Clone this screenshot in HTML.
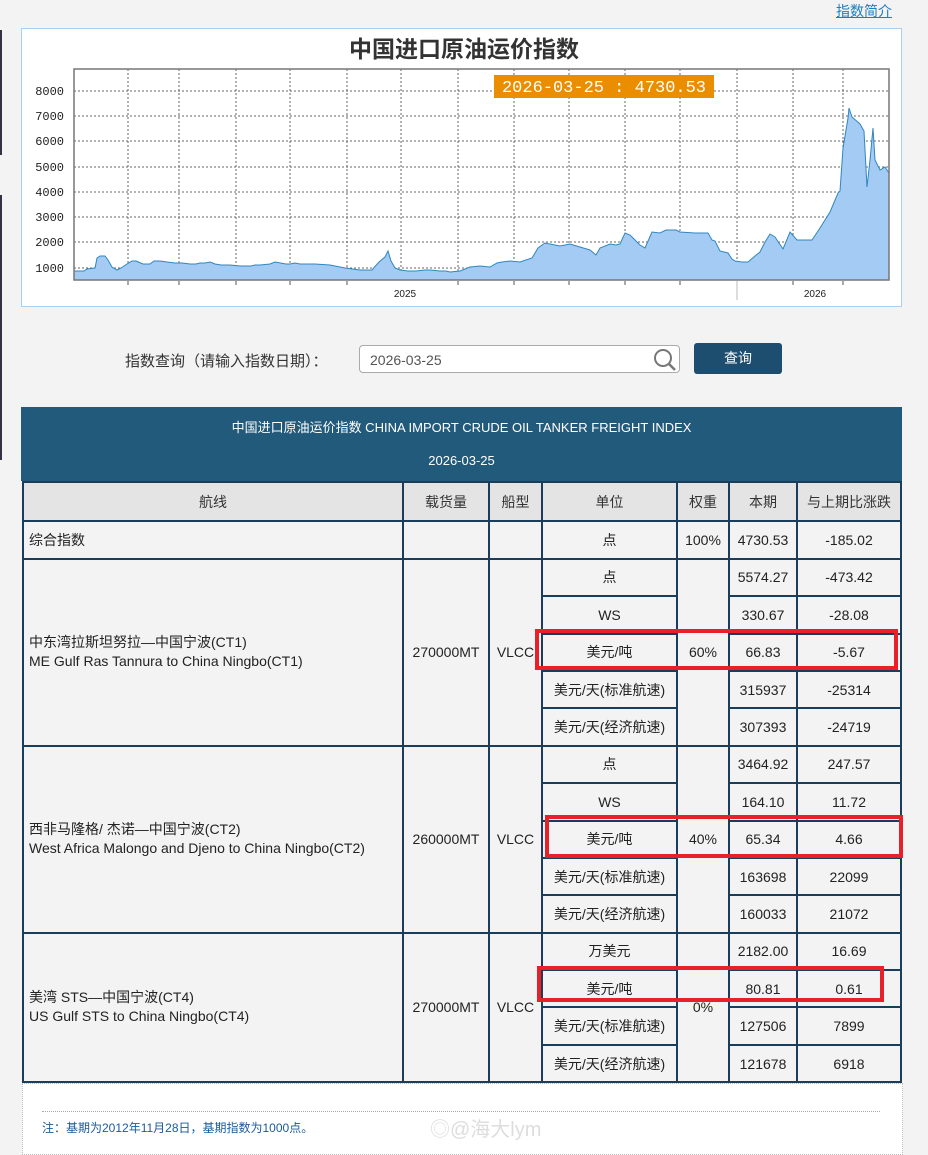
<!DOCTYPE html>
<html><head><meta charset="utf-8"><style>
body{margin:0;width:928px;height:1149px;background:#f3f3f3;font-family:"Liberation Sans","Noto Sans CJK SC",sans-serif;position:relative;overflow:hidden;color:#222}
.abs{position:absolute}
table{border-collapse:collapse;table-layout:fixed;position:absolute;left:22px;top:481px;width:878px}
td{border:2px solid #1b3d5c;height:35.4px;padding:0;text-align:center;font-size:14px;background:#f3f3f3;color:#222}
th{border:2px solid #1b3d5c;height:35.4px;font-weight:normal;font-size:14px;background:#e4e4e4;color:#333}
td.l{text-align:left;padding-left:5px;line-height:19px}
.red{position:absolute;border:4px solid #e8202a;box-sizing:border-box}
</style></head><body>
<div class="abs" style="left:0;top:30px;width:2px;height:125px;background:#334"></div>
<div class="abs" style="left:0;top:195px;width:2px;height:265px;background:#334"></div>
<div class="abs" style="left:836px;top:1px;font-size:14px;color:#1a7fc0;text-decoration:underline">指数简介</div>
<div class="abs" style="left:21px;top:28px;width:879px;height:277px;background:#fff;border:1px solid #a9d0f0"></div>
<div class="abs" style="left:0;width:928px;top:30px;text-align:center;font-size:23px;font-weight:bold;color:#333;font-family:'Noto Sans CJK SC',sans-serif">中国进口原油运价指数</div>
<svg class="abs" style="left:0;top:0" width="928" height="310">
<g stroke="#666" stroke-dasharray="2,2" stroke-width="1">
<line x1="74" x2="889" y1="91" y2="91"/><line x1="74" x2="889" y1="116" y2="116"/><line x1="74" x2="889" y1="141" y2="141"/><line x1="74" x2="889" y1="167" y2="167"/><line x1="74" x2="889" y1="192" y2="192"/><line x1="74" x2="889" y1="217" y2="217"/><line x1="74" x2="889" y1="242" y2="242"/><line x1="74" x2="889" y1="268" y2="268"/>
<line x1="128" x2="128" y1="69" y2="280"/><line x1="179" x2="179" y1="69" y2="280"/><line x1="236" x2="236" y1="69" y2="280"/><line x1="290" x2="290" y1="69" y2="280"/><line x1="347" x2="347" y1="69" y2="280"/><line x1="401" x2="401" y1="69" y2="280"/><line x1="458" x2="458" y1="69" y2="280"/><line x1="514" x2="514" y1="69" y2="280"/><line x1="569" x2="569" y1="69" y2="280"/><line x1="625" x2="625" y1="69" y2="280"/><line x1="680" x2="680" y1="69" y2="280"/><line x1="737" x2="737" y1="69" y2="280"/><line x1="793" x2="793" y1="69" y2="280"/><line x1="843" x2="843" y1="69" y2="280"/>
</g>
<polygon fill="#a3cbf3" stroke="#2f86c0" stroke-width="1" points="74,280 74,271 84,271 87,269 95,268 97,258 100,256 105,256 108,260 112,267 117,270 121,268 127,264 132,261 136,261 143,264 150,264 154,261 160,261 167,262 175,263 182,263 190,264 196,264 200,263 205,263 210,262 215,264 221,265 230,265 240,266 251,266 255,265 260,265 270,264 275,262 286,264 290,264 295,263 300,264 305,264 315,264 330,265 345,268 360,270 372,270 379,262 385,257 388,251 391,261 395,268 400,270 408,271 416,271 425,270 430,270 440,271 446,271 450,272 460,271 470,267 480,266 490,267 497,263 502,262 510,261 520,262 532,258 538,248 545,243 560,246 570,244 590,250 596,255 600,248 610,244 616,245 620,244 625,233 630,235 640,245 645,248 652,232 660,233 666,230 676,230 680,232 695,233 708,233 712,240 715,241 720,251 728,253 732,259 735,261 742,262 748,262 755,256 760,252 765,242 770,234 775,237 783,249 790,232 797,240 812,240 820,228 830,212 838,193 840,191 843,148 848,118 849,108 852,117 860,124 864,131 867,187 870,160 873,128 875,160 880,170 885,167 889,173 889,280"/>
<rect x="74" y="69" width="815" height="211" fill="none" stroke="#777" stroke-width="1.5"/>
<g font-family="Liberation Mono,monospace" font-size="12" fill="#222" text-anchor="end">
<text x="64" y="95">8000</text><text x="64" y="120">7000</text><text x="64" y="145">6000</text><text x="64" y="171">5000</text><text x="64" y="196">4000</text><text x="64" y="221">3000</text><text x="64" y="246">2000</text><text x="64" y="272">1000</text></g>
<g stroke="#555"><line x1="128" x2="128" y1="281" y2="285"/><line x1="179" x2="179" y1="281" y2="285"/><line x1="236" x2="236" y1="281" y2="285"/><line x1="290" x2="290" y1="281" y2="285"/><line x1="347" x2="347" y1="281" y2="285"/><line x1="458" x2="458" y1="281" y2="285"/><line x1="514" x2="514" y1="281" y2="285"/><line x1="569" x2="569" y1="281" y2="285"/><line x1="625" x2="625" y1="281" y2="285"/><line x1="680" x2="680" y1="281" y2="285"/><line x1="737" x2="737" y1="281" y2="300" stroke="#bbb"/><line x1="793" x2="793" y1="281" y2="285"/><line x1="843" x2="843" y1="281" y2="285"/></g>
<g font-family="Liberation Sans,sans-serif" font-size="10" fill="#222" text-anchor="middle"><text x="405" y="297">2025</text><text x="815" y="297">2026</text></g>
<rect x="494" y="75" width="220" height="23" fill="#ea8e00"/>
<text x="604" y="92" font-family="Liberation Mono,monospace" font-size="17" fill="#fff" text-anchor="middle">2026-03-25 : 4730.53</text>
</svg>
<div class="abs" style="left:125px;top:350px;font-size:15px;color:#333">指数查询（请输入指数日期）：</div>
<div class="abs" style="left:359px;top:345px;width:321px;height:28px;border:1px solid #aaa;border-radius:4px;background:#fff;font-size:14px;color:#555;line-height:28px;box-sizing:border-box;padding-left:10px">2026-03-25</div>
<svg class="abs" style="left:652px;top:348px" width="26" height="24"><circle cx="11" cy="10" r="8" fill="none" stroke="#777" stroke-width="2"/><line x1="17" y1="16" x2="23" y2="22" stroke="#777" stroke-width="2.5"/></svg>
<div class="abs" style="left:694px;top:343px;width:88px;height:31px;background:#1d4e70;border-radius:3px;color:#fff;font-size:14px;line-height:31px;text-align:center">查询</div>
<div class="abs" style="left:21px;top:407px;width:881px;height:74px;background:#215a7a;color:#fff;font-size:13px;text-align:center"><div style="margin-top:10px">中国进口原油运价指数 CHINA IMPORT CRUDE OIL TANKER FREIGHT INDEX</div><div style="margin-top:17px">2026-03-25</div></div>
<div class="abs" style="left:22px;top:1083px;width:879px;height:70px;background:#fff;border:1px dotted #bbb"></div>
<div class="abs" style="left:42px;top:1111px;width:838px;border-top:1px dotted #aaa"></div>
<div class="abs" style="left:42px;top:1119px;font-size:12px;color:#1a5a9a">注：基期为2012年11月28日，基期指数为1000点。</div>
<div class="abs" style="left:430px;top:1113px;font-size:20px;color:#ddd">◎@海大lym</div>
<table>
<colgroup><col style="width:380px"><col style="width:86px"><col style="width:53px"><col style="width:135px"><col style="width:52px"><col style="width:68px"><col style="width:104px"></colgroup>
<tr><th>航线</th><th>载货量</th><th>船型</th><th>单位</th><th>权重</th><th>本期</th><th>与上期比涨跌</th></tr>
<tr><td class="l">综合指数</td><td></td><td></td><td>点</td><td>100%</td><td>4730.53</td><td>-185.02</td></tr>
<tr><td class="l" rowspan="5">中东湾拉斯坦努拉—中国宁波(CT1)<br>ME Gulf Ras Tannura to China Ningbo(CT1)</td><td rowspan="5">270000MT</td><td rowspan="5">VLCC</td><td>点</td><td rowspan="5">60%</td><td>5574.27</td><td>-473.42</td></tr>
<tr><td>WS</td><td>330.67</td><td>-28.08</td></tr>
<tr><td>美元/吨</td><td>66.83</td><td>-5.67</td></tr>
<tr><td>美元/天(标准航速)</td><td>315937</td><td>-25314</td></tr>
<tr><td>美元/天(经济航速)</td><td>307393</td><td>-24719</td></tr>
<tr><td class="l" rowspan="5">西非马隆格/ 杰诺—中国宁波(CT2)<br>West Africa Malongo and Djeno to China Ningbo(CT2)</td><td rowspan="5">260000MT</td><td rowspan="5">VLCC</td><td>点</td><td rowspan="5">40%</td><td>3464.92</td><td>247.57</td></tr>
<tr><td>WS</td><td>164.10</td><td>11.72</td></tr>
<tr><td>美元/吨</td><td>65.34</td><td>4.66</td></tr>
<tr><td>美元/天(标准航速)</td><td>163698</td><td>22099</td></tr>
<tr><td>美元/天(经济航速)</td><td>160033</td><td>21072</td></tr>
<tr><td class="l" rowspan="4">美湾 STS—中国宁波(CT4)<br>US Gulf STS to China Ningbo(CT4)</td><td rowspan="4">270000MT</td><td rowspan="4">VLCC</td><td>万美元</td><td rowspan="4">0%</td><td>2182.00</td><td>16.69</td></tr>
<tr><td>美元/吨</td><td>80.81</td><td>0.61</td></tr>
<tr><td>美元/天(标准航速)</td><td>127506</td><td>7899</td></tr>
<tr><td>美元/天(经济航速)</td><td>121678</td><td>6918</td></tr>
</table>
<div class="red" style="left:535px;top:629px;width:363px;height:41px"></div>
<div class="red" style="left:545px;top:815px;width:358px;height:43px"></div>
<div class="red" style="left:537px;top:966px;width:347px;height:36px"></div>
</body></html>
